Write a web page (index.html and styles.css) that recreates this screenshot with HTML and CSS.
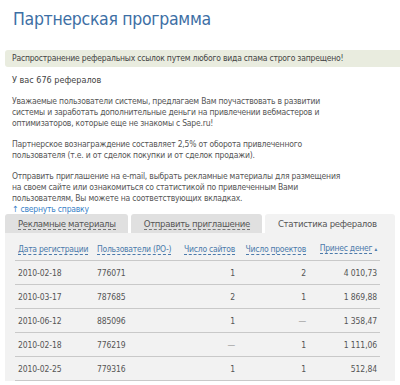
FILE: index.html
```html
<!DOCTYPE html>
<html lang="ru">
<head>
    <meta charset="UTF-8">
    <title>Партнерская программа</title>
    <link rel="stylesheet" href="styles.css">
</head>
<body>

<div class="page">
    <h1>Партнерская программа</h1>

    <div class="alert">Распространение реферальных ссылок путем любого вида спама строго запрещено!</div>

    <div class="count">У вас 676 рефералов</div>

    <div class="help">
        <p>Уважаемые пользователи системы, предлагаем Вам поучаствовать в развитии системы и заработать дополнительные деньги на привлечении вебмастеров и оптимизаторов, которые еще не знакомы с Sape.ru!</p>
        <p>Партнерское вознаграждение составляет 2,5% от оборота привлеченного пользователя (т.е. и от сделок покупки и от сделок продажи).</p>
        <p>Отправить приглашение на e-mail, выбрать рекламные материалы для размещения на своем сайте или ознакомиться со статистикой по привлеченным Вами пользователям, Вы можете на соответствующих вкладках.</p>
    </div>
    <a class="toggle" href="#">↑ <span>свернуть справку</span></a>

    <div class="tabs">
        <div class="tab"><span>Рекламные материалы</span></div>
        <div class="tab"><span>Отправить приглашение</span></div>
        <div class="tab active"><span>Статистика рефералов</span></div>
    </div>

    <div class="panel">
        <table class="stats">
            <thead>
                <tr>
                    <th class="c-date"><a href="#">Дата регистрации</a></th>
                    <th class="c-user"><a href="#">Пользователи (PO-)</a></th>
                    <th class="c-num c-sites"><a href="#">Число сайтов</a></th>
                    <th class="c-num c-proj"><a href="#">Число проектов</a></th>
                    <th class="c-num c-money"><a href="#">Принес денег</a> <span class="sort">▴</span></th>
                </tr>
            </thead>
            <tbody>
                <tr><td>2010-02-18</td><td>776071</td><td class="c-num">1</td><td class="c-num">2</td><td class="c-num">4&nbsp;010,73</td></tr>
                <tr><td>2010-03-17</td><td>787685</td><td class="c-num">2</td><td class="c-num">1</td><td class="c-num">1&nbsp;869,88</td></tr>
                <tr><td>2010-06-12</td><td>885096</td><td class="c-num">1</td><td class="c-num dash">—</td><td class="c-num">1&nbsp;358,47</td></tr>
                <tr><td>2010-02-18</td><td>776219</td><td class="c-num dash">—</td><td class="c-num">1</td><td class="c-num">1&nbsp;111,06</td></tr>
                <tr><td>2010-02-25</td><td>779316</td><td class="c-num">1</td><td class="c-num">1</td><td class="c-num">512,84</td></tr>
            </tbody>
        </table>
    </div>
</div>

</body>
</html>
```

FILE: styles.css
```css
/* General */
body {
    margin: 0;
    padding: 0;
    font-family: "DejaVu Sans Condensed", "DejaVu Sans", sans-serif;
    font-stretch: condensed;
    color: #555;
    background: #fff;
}

.page {
    padding-left: 5px;
}

h1 {
    margin: 0;
    padding: 7px 0 0 8px;
    font-size: 17.5px;
    letter-spacing: -0.3px;
    line-height: 24px;
    font-weight: normal;
    color: #3d6fa5;
}

/* Warning */
.alert {
    margin-top: 19px;
    height: 17px;
    padding: 0 7px;
    line-height: 17px;
    font-size: 8.5px;
    letter-spacing: -0.2px;
    color: #444;
    background: #e9ecdf;
    border-radius: 3px 0 0 3px;
}

.count {
    margin: 7px 0 0 7px;
    font-size: 9px;
    line-height: 12px;
    color: #444;
}

/* Help text */
.help {
    width: 335px;
    padding-left: 7px;
}

.help p {
    margin: 10px 0 0;
    font-size: 8.5px;
    letter-spacing: -0.2px;
    line-height: 11px;
}

.toggle {
    display: block;
    margin-left: 7px;
    font-size: 8.5px;
    letter-spacing: -0.2px;
    line-height: 10px;
    color: #3a82c8;
    text-decoration: none;
}

.toggle span {
    border-bottom: 1px dotted #3a82c8;
}

/* Tabs */
.tabs {
    display: flex;
    gap: 3px;
    width: 390px;
}

.tab {
    height: 19px;
    padding: 0 12px 0 13px;
    line-height: 19px;
    font-size: 9.5px;
    letter-spacing: -0.3px;
    white-space: nowrap;
    color: #555;
    background: #e0e0e0;
    border-radius: 3px 3px 0 0;
}

.tab span {
    border-bottom: 1px dashed #777;
}

.tab.active {
    flex: 1;
    background: #f2f2f2;
}

.tab.active span {
    border-bottom: none;
}

/* Stats table */
.panel {
    width: 365px;
    padding: 0 15px 0 10px;
    background: #f2f2f2;
}

.stats {
    width: 365px;
    border-collapse: collapse;
    table-layout: fixed;
    font-size: 8.5px;
    letter-spacing: -0.1px;
}

.stats th {
    padding: 9px 3px 5px;
    line-height: 12px;
    font-weight: normal;
    letter-spacing: -0.25px;
    text-align: left;
    white-space: nowrap;
    border-bottom: 1px solid #c9c9c9;
}

.stats th a {
    color: #4b7aab;
    text-decoration: none;
    border-bottom: 1px dashed #4b7aab;
}

.stats th .sort {
    font-size: 6px;
    color: #4b7aab;
}

.stats td {
    padding: 6px 3px 5px;
    line-height: 12px;
    color: #555;
    border-bottom: 1px solid #c9c9c9;
}

.stats .c-num {
    text-align: right;
}

.stats .c-date { width: 73px; }
.stats .c-user { width: 80px; }
.stats .c-sites { width: 52px; }
.stats .c-proj { width: 65px; }

.stats td.dash {
    color: #999;
}
```
